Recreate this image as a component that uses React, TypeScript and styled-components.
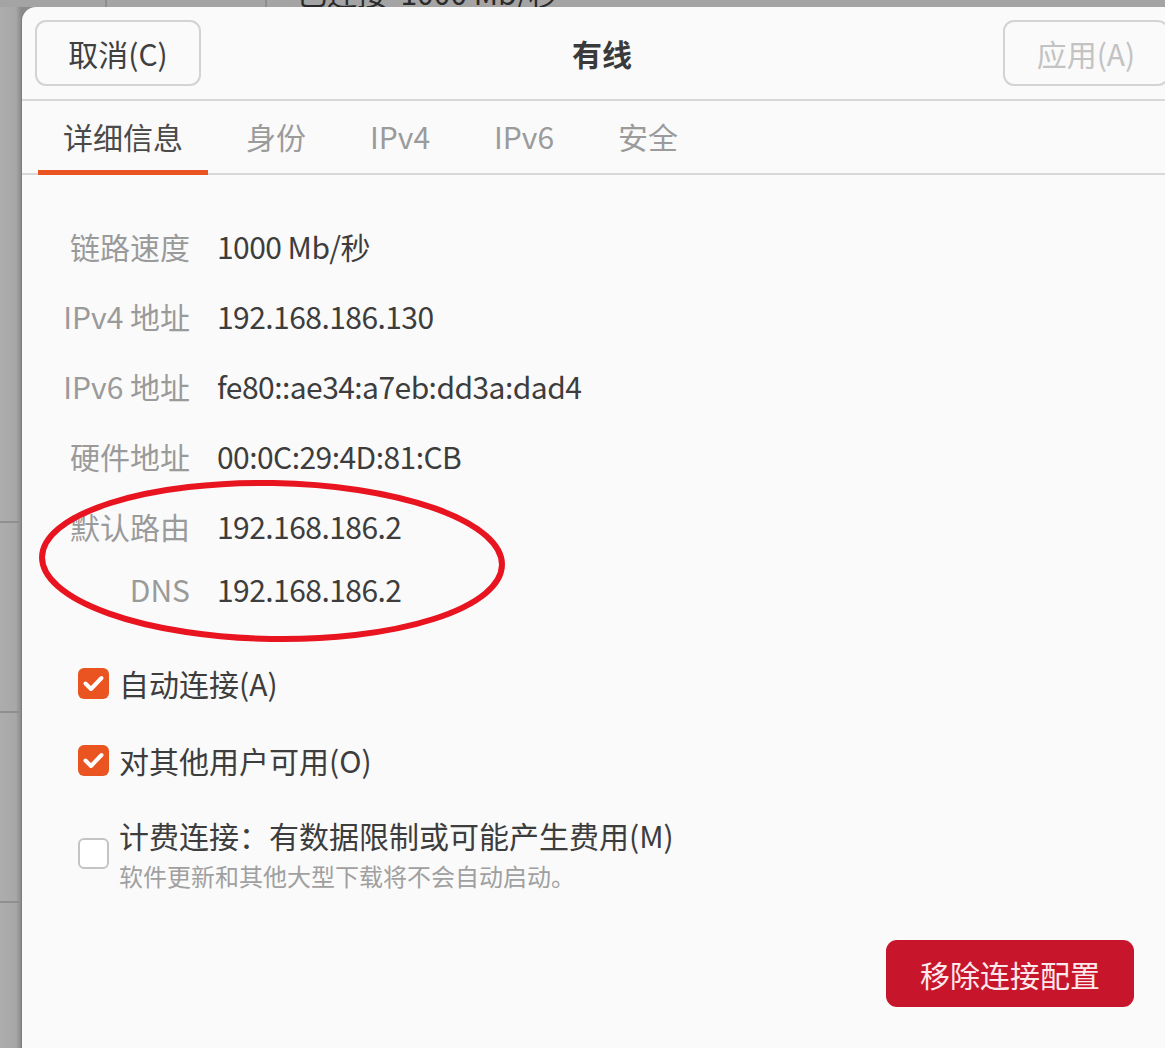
import styled, { createGlobalStyle } from "styled-components";

const GlobalStyle = createGlobalStyle`
    html, body {
        margin: 0;
        padding: 0;
        overflow: hidden;
    }

    body {
        font-family: "Noto Sans CJK SC", "Noto Sans", sans-serif;
        color: #3d3d3d;
    }
`

const Desktop = styled.div`
    position: relative;
    width: 1165px;
    height: 1048px;
    overflow: hidden;
    background: linear-gradient(to right, #adadad 0, #a7a7a7 16px, #8b8b8b 21px, #8b8b8b 22px);
`

const BehindHeader = styled.div`
    display: flex;
    height: 7px;
    overflow: hidden;
    background: #a4a4a4;
`

const BehindCell = styled.div<{ $width: number }>`
    flex: 0 0 ${p => p.$width}px;
    height: 100%;
    border-right: 2px solid #8d8d8d;
    box-sizing: border-box;
`

const BehindText = styled.div`
    margin: -23px 0 0 30px;
    font-size: 30px;
    line-height: 30px;
    color: #2a2a2a;
    white-space: pre;
`

const BehindList = styled.div`
    display: flex;
    flex-direction: column;
    width: 22px;
    padding-top: 514px;
`

const BehindRow = styled.div`
    height: 190px;
    border-top: 2px solid #8f8f8f;
    box-sizing: border-box;
`

const Dialog = styled.div`
    position: absolute;
    left: 22px;
    top: 7px;
    width: 1160px;
    height: 1060px;
    display: flex;
    flex-direction: column;
    background: #fafafa;
    border-radius: 14px 14px 0 0;
    box-shadow: -1px 0 0 #7d7d7d;
`

const HeaderBar = styled.div`
    display: grid;
    grid-template-columns: 166px 1fr 166px;
    align-items: center;
    height: 92px;
    padding: 0 13px;
    border-bottom: 2px solid #d8d8d8;
`

const HeaderButton = styled.button<{ $disabled?: boolean }>`
    height: 66px;
    border: 2px solid #d3d3d3;
    border-radius: 11px;
    background: #fafafa;
    font-family: inherit;
    font-size: 30px;
    color: ${p => p.$disabled ? "#c3c3c3" : "#404040"};
    padding: 0;
`

const Title = styled.div`
    text-align: center;
    font-size: 30px;
    font-weight: 700;
    color: #3a3a3a;
`

const TabBar = styled.div`
    display: flex;
    height: 72px;
    padding-left: 16px;
    border-bottom: 2px solid #d8d8d8;
`

const Tab = styled.div<{ $active?: boolean }>`
    display: flex;
    align-items: center;
    justify-content: center;
    min-width: 124px;
    padding: 0 25px;
    box-sizing: border-box;
    margin-bottom: -2px;
    margin-right: ${p => p.$active ? 6 : 0}px;
    font-size: 30px;
    color: ${p => p.$active ? "#4a4a4a" : "#9b9b9b"};
    border-bottom: 5px solid ${p => p.$active ? "#e95420" : "transparent"};
`

const Content = styled.div`
    position: relative;
    flex: 1;
    display: flex;
    flex-direction: column;
    padding: 36px 48px 0 40px;
`

const DetailGrid = styled.div`
    display: grid;
    grid-template-columns: 128px 1fr;
    grid-template-rows: repeat(5, 70px) 56px;
    column-gap: 27px;
    align-items: center;
`

const Label = styled.div`
    text-align: right;
    font-size: 30px;
    color: #9a9a9a;
    white-space: nowrap;
`

const Value = styled.div`
    font-size: 30px;
    color: #3d3d3d;
    letter-spacing: -0.55px;
    white-space: nowrap;
`

const Options = styled.div`
    display: flex;
    flex-direction: column;
    gap: 27px;
    margin: 41px 0 0 16px;
`

const Option = styled.div`
    display: flex;
    align-items: center;
    gap: 10px;
    min-height: 50px;
`

const MeteredOption = styled(Option)`
    margin-top: 3px;
`

const Box = styled.div<{ $checked?: boolean }>`
    flex: 0 0 31px;
    height: 31px;
    box-sizing: border-box;
    border-radius: 6px;
    display: flex;
    align-items: center;
    justify-content: center;
    background: ${p => p.$checked ? "#e95420" : "#ffffff"};
    border: ${p => p.$checked ? "none" : "2px solid #c4c4c4"};
`

const OptionText = styled.div`
    display: flex;
    flex-direction: column;
`

const OptionTitle = styled.div`
    font-size: 30px;
    line-height: 40px;
    color: #3d3d3d;
`

const OptionSub = styled.div`
    margin-top: 5px;
    font-size: 24px;
    line-height: 32px;
    color: #a0a0a0;
`

const Footer = styled.div`
    display: flex;
    justify-content: flex-end;
    margin-top: 48px;
`

const DangerButton = styled.button`
    width: 248px;
    height: 67px;
    border: none;
    border-radius: 11px;
    background: #c7162b;
    font-family: inherit;
    font-size: 30px;
    color: #fde8ec;
`

const Annotation = styled.svg`
    position: absolute;
    left: 13px;
    top: 302px;
    pointer-events: none;
`

function Check() {
    return (
        <svg width="31" height="31" viewBox="0 0 31 31">
            <path d="M7.5 15.5 L13 21 L23.5 10" fill="none" stroke="#ffffff" strokeWidth="4" strokeLinecap="round" strokeLinejoin="round" />
        </svg>
    )
}

const details: [string, string][] = [
    ["链路速度", "1000 Mb/秒"],
    ["IPv4 地址", "192.168.186.130"],
    ["IPv6 地址", "fe80::ae34:a7eb:dd3a:dad4"],
    ["硬件地址", "00:0C:29:4D:81:CB"],
    ["默认路由", "192.168.186.2"],
    ["DNS", "192.168.186.2"],
]

const tabs = ["详细信息", "身份", "IPv4", "IPv6", "安全"]

export default function App() {
    return (
        <Desktop>
            <GlobalStyle />

            <BehindHeader>
                <BehindCell $width={107} />
                <BehindCell $width={160} />
                <BehindText>{"已连接  1000 Mb/秒"}</BehindText>
            </BehindHeader>
            <BehindList>
                <BehindRow />
                <BehindRow />
                <BehindRow />
            </BehindList>

            <Dialog>
                <HeaderBar>
                    <HeaderButton>取消(C)</HeaderButton>
                    <Title>有线</Title>
                    <HeaderButton $disabled>应用(A)</HeaderButton>
                </HeaderBar>

                <TabBar>{
                    tabs.map((tab, index) =>
                        <Tab key={ tab } $active={ index === 0 }>{ tab }</Tab>
                    )
                }</TabBar>

                <Content>
                    <DetailGrid>{
                        details.map(([label, value]) => [
                            <Label key={ label + "-l" }>{ label }</Label>,
                            <Value key={ label + "-v" }>{ value }</Value>
                        ])
                    }</DetailGrid>

                    <Options>
                        <Option>
                            <Box $checked><Check /></Box>
                            <OptionTitle>自动连接(A)</OptionTitle>
                        </Option>
                        <Option>
                            <Box $checked><Check /></Box>
                            <OptionTitle>对其他用户可用(O)</OptionTitle>
                        </Option>
                        <MeteredOption>
                            <Box />
                            <OptionText>
                                <OptionTitle>计费连接：有数据限制或可能产生费用(M)</OptionTitle>
                                <OptionSub>软件更新和其他大型下载将不会自动启动。</OptionSub>
                            </OptionText>
                        </MeteredOption>
                    </Options>

                    <Footer>
                        <DangerButton>移除连接配置</DangerButton>
                    </Footer>

                    <Annotation width="474" height="170" viewBox="0 0 474 170">
                        <ellipse cx="237" cy="84" rx="230" ry="78" fill="none" stroke="#e8141f" strokeWidth="6" transform="rotate(1 237 84)" />
                    </Annotation>
                </Content>
            </Dialog>
        </Desktop>
    )
}
